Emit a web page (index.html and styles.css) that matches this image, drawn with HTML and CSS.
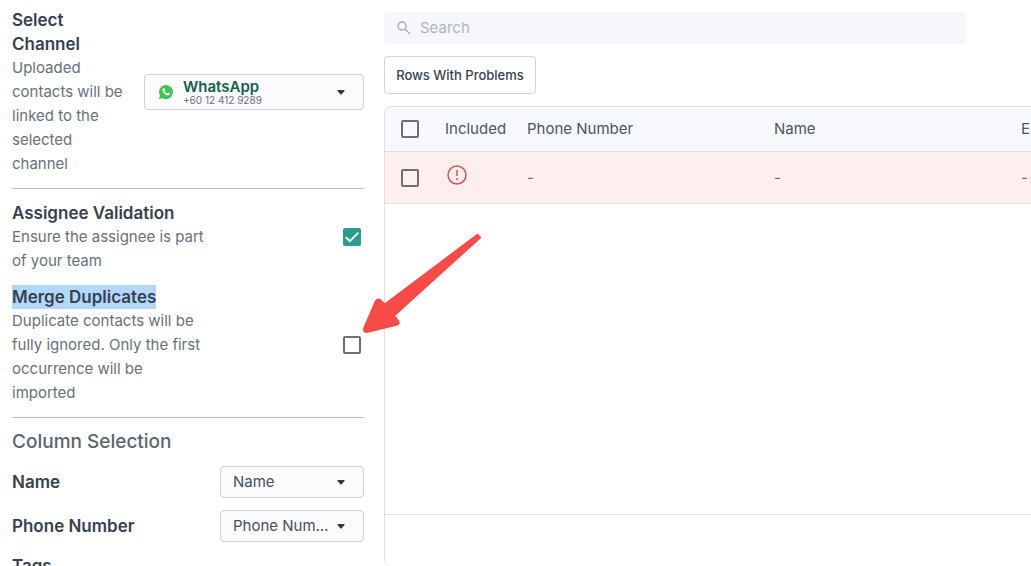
FILE: index.html
```html
<!DOCTYPE html>
<html lang="en">

<head>
    <meta charset="UTF-8">
    <meta name="viewport" content="width=device-width, initial-scale=1.0">
    <title>Import Contacts</title>
    <link rel="stylesheet" href="styles.css">
</head>

<body>
    <div class="page">
        <aside class="sidebar">
            <section class="section">
                <div class="setting">
                    <div class="channel-text">
                        <label class="title" for="channel">Select Channel</label>
                        <p class="desc">Uploaded contacts will be linked to the selected channel</p>
                    </div>
                    <div class="dropdown channel">
                        <select id="channel">
                            <option>WhatsApp</option>
                        </select>
                        <svg class="channel-icon" viewBox="0 0 16 16" aria-hidden="true">
                            <path fill="#3fc351" d="M8 1a7 7 0 1 1-3.300 13.200L1 15l1-3.500A7 7 0 0 1 8 1z" />
                            <path fill="#fff" d="M5.300 4.300c.4-.4.900-.4 1.100.1l.6 1.400c.1.300 0 .5-.5 1.100.6 1.200 1.400 1.900 2.600 2.500.6-.8.8-.9 1.100-.8l1.400.7c.4.200.4.400.2 1-.3.900-1.400 1.400-2.400 1.100C6.800 10.600 5.100 8.900 4.500 6.500c-.2-.9.200-1.700.8-2.200z" />
                        </svg>
                        <span class="channel-number">+60 12 412 9289</span>
                        <svg class="caret" viewBox="0 0 8 5" aria-hidden="true"><path d="M1 0h6q1 0 .5 1L4.700 4.200q-.7.700-1.400 0L.5 1Q0 0 1 0z" /></svg>
                    </div>
                </div>
            </section>

            <section class="section">
                <div class="setting">
                    <div class="setting-text">
                        <label class="title" for="assignee">Assignee Validation</label>
                        <p class="desc">Ensure the assignee is part of your team</p>
                    </div>
                    <input type="checkbox" id="assignee" checked>
                </div>
                <div class="setting">
                    <div class="setting-text">
                        <label class="title" for="merge"><mark>Merge Duplicates</mark></label>
                        <p class="desc">Duplicate contacts will be fully ignored. Only the first occurrence will be imported</p>
                    </div>
                    <input type="checkbox" id="merge">
                </div>
            </section>

            <section class="section">
                <h2>Column Selection</h2>
                <div class="column-row">
                    <label class="title" for="col-name">Name</label>
                    <div class="dropdown">
                        <select id="col-name">
                            <option>Name</option>
                        </select>
                        <svg class="caret" viewBox="0 0 8 5" aria-hidden="true"><path d="M1 0h6q1 0 .5 1L4.700 4.200q-.7.700-1.400 0L.5 1Q0 0 1 0z" /></svg>
                    </div>
                </div>
                <div class="column-row">
                    <label class="title" for="col-phone">Phone Number</label>
                    <div class="dropdown">
                        <select id="col-phone">
                            <option>Phone Number</option>
                        </select>
                        <svg class="caret" viewBox="0 0 8 5" aria-hidden="true"><path d="M1 0h6q1 0 .5 1L4.700 4.200q-.7.700-1.400 0L.5 1Q0 0 1 0z" /></svg>
                    </div>
                </div>
                <div class="column-row">
                    <span class="title">Tags</span>
                </div>
            </section>
        </aside>

        <main class="content">
            <div class="search">
                <svg viewBox="0 0 14 14" aria-hidden="true">
                    <circle cx="5" cy="5" r="4" />
                    <path d="M8 8l5 5" />
                </svg>
                <input type="text" placeholder="Search" aria-label="Search">
            </div>

            <button type="button" class="problems">Rows With Problems</button>

            <div class="table-card">
                <div class="table-body">
                    <table>
                        <colgroup>
                            <col class="col-check">
                            <col class="col-included">
                            <col class="col-data">
                            <col class="col-data">
                            <col class="col-data">
                        </colgroup>
                        <thead>
                            <tr>
                                <th><input type="checkbox" aria-label="Select all rows"></th>
                                <th>Included</th>
                                <th>Phone Number</th>
                                <th>Name</th>
                                <th>Email</th>
                            </tr>
                        </thead>
                        <tbody>
                            <tr class="error">
                                <td><input type="checkbox" aria-label="Select row"></td>
                                <td>
                                    <svg class="alert" viewBox="0 0 20 20" role="img" aria-label="Row has problems">
                                        <circle cx="10" cy="10" r="9" />
                                        <path d="M10 5v6M10 13v2" />
                                    </svg>
                                </td>
                                <td>-</td>
                                <td>-</td>
                                <td>-</td>
                            </tr>
                        </tbody>
                    </table>
                </div>
                <div class="table-footer"></div>
            </div>
        </main>

        <svg class="arrow" viewBox="0 0 120 102" aria-hidden="true">
            <path d="M115.500 2.500L118.800 5.800Q119.500 6.500 118.500 7.500L33.300 84.700L37 89.500Q39 93 35.500 94.500L5 102Q0 102 1.200 97L13 69.500Q15.500 66 19 68.500L22.700 72.300L115.500 2.500z" />
        </svg>
    </div>
</body>

</html>
```

FILE: styles.css
```css
* {
    box-sizing: border-box;
}

body {
    margin: 0;
    font-family: Inter, "Liberation Sans", sans-serif;
    font-size: 15px;
    line-height: 24px;
    color: #36424d;
    background-color: #fff;
}

.page {
    position: relative;
    display: flex;
    gap: 20px;
    height: 100vh;
    padding-left: 12px;
    overflow: hidden;
}

/* left side settings */

.sidebar {
    flex: 0 0 352px;
    padding-top: 8px;
}

.section {
    display: flex;
    flex-direction: column;
    gap: 12px;
    padding-bottom: 12px;
}

.section + .section {
    padding-top: 12px;
    border-top: 1px solid #bcbfc2;
}

.setting,
.column-row {
    display: flex;
    align-items: center;
    justify-content: space-between;
    gap: 12px;
}

.channel-text {
    width: 116px;
}

.setting-text {
    width: 192px;
}

.title {
    display: block;
    font-size: 17px;
    font-weight: 600;
}

mark {
    display: block;
    width: fit-content;
    color: inherit;
    background-color: #b3d7ff;
}

.desc {
    margin: 0;
    color: #66717c;
}

h2 {
    margin: 0;
    font-size: 19px;
    font-weight: 500;
    line-height: 24px;
    color: #5a6670;
}

.dropdown {
    position: relative;
    flex: 0 0 144px;
}

.dropdown select {
    display: block;
    appearance: none;
    width: 100%;
    height: 32px;
    padding: 0 32px 0 12px;
    border: 1px solid #cfd2db;
    border-radius: 4px;
    background-color: #fbfbfd;
    color: #44505c;
    font: inherit;
    text-overflow: ellipsis;
}

.channel {
    flex-basis: 220px;
}

.channel select {
    height: 36px;
    padding: 0 36px 12px 38px;
    color: #11604f;
    font-weight: 600;
}

.channel-icon {
    position: absolute;
    top: 10px;
    left: 14px;
    width: 16px;
    height: 16px;
    pointer-events: none;
}

.channel-number {
    position: absolute;
    top: 20px;
    left: 39px;
    font-size: 10px;
    line-height: 12px;
    color: #66717c;
    pointer-events: none;
}

.caret {
    position: absolute;
    top: calc(50% - 2px);
    right: 19px;
    width: 8px;
    height: 5px;
    fill: #2c3844;
    pointer-events: none;
}

/* checkboxes */

input[type="checkbox"] {
    appearance: none;
    display: block;
    flex: none;
    width: 18px;
    height: 18px;
    margin: 0;
    border: 2px solid #706f6f;
    border-radius: 2px;
}

.setting input[type="checkbox"] {
    margin-right: 3px;
}

input[type="checkbox"]:checked {
    border-color: #2a9d8c;
    background-color: #2a9d8c;
}

input[type="checkbox"]:checked::before {
    content: "";
    display: block;
    height: 14px;
    background-color: #fff;
    clip-path: polygon(0 55%, 9% 46%, 35% 70%, 91% 14%, 100% 24%, 35% 89%);
}

/* right side */

.content {
    display: flex;
    flex: 1;
    flex-direction: column;
    align-items: flex-start;
    gap: 12px;
    min-width: 0;
    padding-top: 12px;
}

.search {
    display: flex;
    align-items: center;
    gap: 9px;
    width: 90%;
    height: 32px;
    flex: none;
    padding: 0 13px;
    border-radius: 4px;
    background-color: #f5f7fb;
}

.search svg {
    width: 14px;
    height: 14px;
    fill: none;
    stroke: #a2a9b0;
    stroke-width: 1.3;
}

.search input {
    flex: 1;
    padding: 0;
    border: none;
    outline: none;
    background: none;
    font: inherit;
}

.search input::placeholder {
    color: #b0b5ba;
}

.problems {
    flex: none;
    width: 152px;
    height: 38px;
    padding: 0;
    border: 1px solid #cfd3d7;
    border-radius: 4px;
    background-color: #fff;
    color: #36424d;
    font-family: inherit;
    font-size: 13px;
    font-weight: 500;
}

.table-card {
    display: flex;
    flex: 1;
    flex-direction: column;
    width: 100%;
    border: 1px solid #dddfe2;
    border-width: 1px 0 0 1px;
    border-radius: 8px 0 0 8px;
    overflow: hidden;
}

.table-body {
    flex: 1;
    overflow: hidden;
}

.table-footer {
    height: 52px;
    border-top: 1px solid #dddfe2;
}

table {
    width: 873px;
    table-layout: fixed;
    border-collapse: separate;
    border-spacing: 0;
}

.col-check {
    width: 50px;
}

.col-included {
    width: 82px;
}

.col-data {
    width: 247px;
}

th,
td {
    height: 45px;
    padding: 0 10px;
    border-bottom: 1px solid #dddfe2;
    font-weight: 400;
    text-align: left;
}

th {
    background-color: #f7f9fd;
    color: #4a5661;
}

th:first-child,
td:first-child {
    padding-left: 16px;
}

td {
    height: 52px;
    color: #66717c;
}

.error td {
    background-color: #feeeee;
}

.alert {
    display: block;
    width: 20px;
    height: 20px;
    margin: 0 2px 6px;
    fill: none;
    stroke: #d9534f;
    stroke-width: 1.5;
}

/* pointer drawn over the page */

.arrow {
    position: absolute;
    top: 231px;
    left: 362px;
    width: 120px;
    height: 102px;
    fill: #f84a47;
    pointer-events: none;
}
```
